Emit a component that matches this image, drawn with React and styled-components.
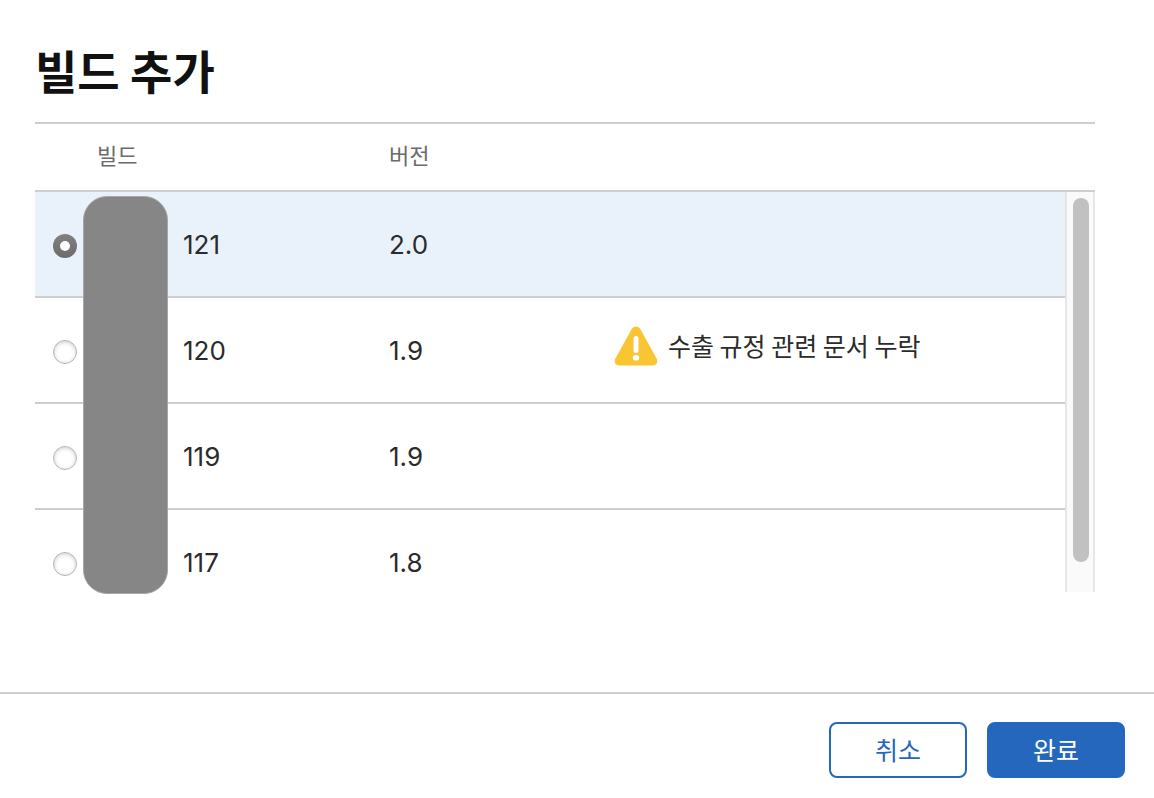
import React, {useState} from 'react'
import styled, {createGlobalStyle} from 'styled-components'

const builds = [
  {id: '121', version: '2.0'},
  {id: '120', version: '1.9', warning: '수출 규정 관련 문서 누락'},
  {id: '119', version: '1.9'},
  {id: '117', version: '1.8'},
]

function WarningIcon() {
  return (
    <svg width="44" height="40" viewBox="0 0 44 40" aria-hidden="true">
      <path
        d="M17.6 3.2C19.6 -0.3 24.4 -0.3 26.4 3.2L42.6 32.6C44.4 36 42.4 39.4 38.8 39.4H5.2C1.6 39.4 -0.4 36 1.4 32.6Z"
        fill="#f9c532"
      />
      <rect x="19.5" y="10" width="5" height="17" rx="2.5" fill="#fff" />
      <ellipse cx="22" cy="31.8" rx="3.2" ry="2.8" fill="#fff" />
    </svg>
  )
}

function App() {
  const [selected, setSelected] = useState('121')
  const [offset, setOffset] = useState(0)

  return (
    <Dialog>
      <GlobalStyle />
      <Content>
        <Title>빌드 추가</Title>
        <List>
          <Table>
            <Head>
              <HeadRow>
                <HeadCell />
                <HeadCell>빌드</HeadCell>
                <HeadCell>버전</HeadCell>
                <HeadCell />
              </HeadRow>
            </Head>
            <Body onScroll={(e) => setOffset(e.currentTarget.scrollTop)}>
              {builds.map((build) => (
                <Row key={build.id} $selected={selected === build.id}>
                  <Cell>
                    <Radio
                      type="radio"
                      name="build"
                      id={`build-${build.id}`}
                      checked={selected === build.id}
                      onChange={() => setSelected(build.id)}
                    />
                  </Cell>
                  <Cell>
                    <BuildLabel htmlFor={`build-${build.id}`}>{build.id}</BuildLabel>
                  </Cell>
                  <Cell>{build.version}</Cell>
                  <Cell>
                    {build.warning && (
                      <Warning>
                        <WarningIcon />
                        <span>{build.warning}</span>
                      </Warning>
                    )}
                  </Cell>
                </Row>
              ))}
            </Body>
          </Table>
          <Mask />
          <Track>
            <Thumb style={{transform: `translateY(${offset}px)`}} />
          </Track>
        </List>
      </Content>
      <Footer>
        <Button type="button">취소</Button>
        <Button type="button" $primary>완료</Button>
      </Footer>
    </Dialog>
  )
}

export default App

const GlobalStyle = createGlobalStyle`
* {
  box-sizing: border-box;
}
body {
  margin: 0;
  background: #fff;
  color: #2b2b2b;
  font-family: "Noto Sans CJK KR", sans-serif;
}
`

const Dialog = styled.main`
min-height: 100vh;
display: flex;
flex-direction: column;
`

const Content = styled.section`
flex: 1;
padding: 37px 59px 0 35px;
`

const Title = styled.h1`
margin: 0 0 21px;
font-size: 46px;
line-height: 64px;
font-weight: 700;
color: #111;
`

const List = styled.div`
position: relative;
`

const Table = styled.table`
display: block;
width: 100%;
`

const Head = styled.thead`
display: block;
border-top: 2px solid #cecece;
border-bottom: 2px solid #cecece;
`

const HeadRow = styled.tr`
display: grid;
grid-template-columns: 62px 292px 226px 1fr;
align-items: center;
height: 66px;
padding-bottom: 6px;
`

const HeadCell = styled.th`
padding: 0;
text-align: left;
font-size: 22px;
line-height: 32px;
font-weight: 400;
color: #6b6b6b;
`

const Body = styled.tbody`
display: block;
height: 400px;
padding-right: 30px;
overflow-y: auto;
scrollbar-width: none;
`

const Row = styled.tr`
display: grid;
grid-template-columns: 62px 292px 226px 1fr;
align-items: center;
height: 106px;
padding-top: 2px;
border-bottom: 2px solid #cecece;
background: ${(props) => (props.$selected ? '#e9f2fa' : '#fff')};
`

const Cell = styled.td`
display: flex;
padding: 0;
font-family: Inter, "Noto Sans CJK KR", sans-serif;
font-size: 26px;
line-height: 36px;
`

const Radio = styled.input`
appearance: none;
display: grid;
place-items: center;
width: 24px;
height: 24px;
margin: 2px 0 0 18px;
border: 1px solid #b4b4b4;
border-radius: 50%;
background: #fff;
box-shadow: inset 0 1px 4px rgba(0, 0, 0, 0.2);

&:checked {
  border: none;
  background: linear-gradient(#808080, #6c6c6c);
  box-shadow: none;
}
&:checked::before {
  content: '';
  width: 10px;
  height: 10px;
  border-radius: 50%;
  background: #fff;
}
`

const BuildLabel = styled.label`
padding-left: 86px;
`

const Warning = styled.div`
display: flex;
align-items: center;
gap: 10px;
padding-bottom: 10px;
margin-left: -1px;
font-family: "Noto Sans CJK KR", sans-serif;
font-size: 25px;
white-space: nowrap;

span {
  padding-bottom: 2px;
}
`

const Mask = styled.div`
position: absolute;
top: 74px;
left: 48px;
width: 85px;
height: 398px;
border: 1px solid #a6a6a6;
border-radius: 24px;
background: #868686;
`

const Track = styled.div`
position: absolute;
top: 70px;
right: 0;
bottom: 0;
width: 30px;
padding: 6px;
border-left: 2px solid #e6e6e6;
border-right: 2px solid #e6e6e6;
background: #fafafa;
`

const Thumb = styled.div`
width: 16px;
height: 364px;
border-radius: 8px;
background: #c1c1c1;
`

const Footer = styled.footer`
display: flex;
justify-content: flex-end;
gap: 20px;
padding: 28px 29px 20px;
border-top: 2px solid #cecece;
`

const Button = styled.button`
width: 138px;
height: 56px;
padding: 0 0 2px;
border: 2px solid #2667be;
border-radius: 8px;
background: ${(props) => (props.$primary ? '#2667be' : '#fff')};
color: ${(props) => (props.$primary ? '#fff' : '#2667be')};
font-family: inherit;
font-size: 25px;
line-height: 36px;
cursor: pointer;
`
